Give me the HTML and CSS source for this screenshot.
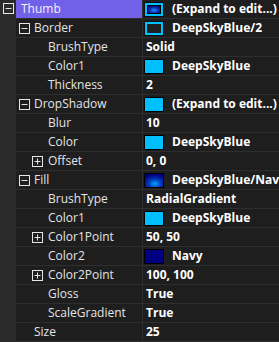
FILE: index.html
```html
<!DOCTYPE html>
<html>
<head>
<meta charset="utf-8">
<link rel="stylesheet" href="styles.css">
</head>
<body>
<div class="grid">
  <div class="row sel">
    <div class="gut"><svg class="tog" width="11" height="11" viewBox="0 0 11 11"><rect x="0.5" y="0.5" width="10" height="10"/><line x1="2.5" y1="5.5" x2="8.5" y2="5.5"/></svg></div>
    <div class="name l1">Thumb</div>
    <div class="val"><span class="sw thumb"><span class="thumb-in"></span></span><b>(Expand to edit...)</b></div>
  </div>
  <div class="row">
    <div class="gut"></div>
    <div class="name l2"><svg class="tog" width="11" height="11" viewBox="0 0 11 11"><rect x="0.5" y="0.5" width="10" height="10"/><line x1="2.5" y1="5.5" x2="8.5" y2="5.5"/></svg>Border</div>
    <div class="val"><span class="sw hollow"></span><b>DeepSkyBlue/2</b></div>
  </div>
  <div class="row"><div class="gut"></div><div class="name l3">BrushType</div><div class="val txt"><b>Solid</b></div></div>
  <div class="row"><div class="gut"></div><div class="name l3">Color1</div><div class="val"><span class="sw dsb"></span><b>DeepSkyBlue</b></div></div>
  <div class="row"><div class="gut"></div><div class="name l3">Thickness</div><div class="val txt"><b>2</b></div></div>
  <div class="row">
    <div class="gut"></div>
    <div class="name l2"><svg class="tog" width="11" height="11" viewBox="0 0 11 11"><rect x="0.5" y="0.5" width="10" height="10"/><line x1="2.5" y1="5.5" x2="8.5" y2="5.5"/></svg>DropShadow</div>
    <div class="val"><span class="sw dsb"></span><b>(Expand to edit...)</b></div>
  </div>
  <div class="row"><div class="gut"></div><div class="name l3">Blur</div><div class="val txt"><b>10</b></div></div>
  <div class="row"><div class="gut"></div><div class="name l3">Color</div><div class="val"><span class="sw dsb"></span><b>DeepSkyBlue</b></div></div>
  <div class="row">
    <div class="gut"></div>
    <div class="name l3b"><svg class="tog" width="11" height="11" viewBox="0 0 11 11"><rect x="0.5" y="0.5" width="10" height="10"/><line x1="2.5" y1="5.5" x2="8.5" y2="5.5"/><line x1="5.5" y1="2.5" x2="5.5" y2="8.5"/></svg>Offset</div>
    <div class="val txt"><b>0, 0</b></div>
  </div>
  <div class="row">
    <div class="gut"></div>
    <div class="name l2"><svg class="tog" width="11" height="11" viewBox="0 0 11 11"><rect x="0.5" y="0.5" width="10" height="10"/><line x1="2.5" y1="5.5" x2="8.5" y2="5.5"/></svg>Fill</div>
    <div class="val"><span class="sw radial"></span><b>DeepSkyBlue/Navy</b></div>
  </div>
  <div class="row"><div class="gut"></div><div class="name l3">BrushType</div><div class="val txt"><b>RadialGradient</b></div></div>
  <div class="row"><div class="gut"></div><div class="name l3">Color1</div><div class="val"><span class="sw dsb"></span><b>DeepSkyBlue</b></div></div>
  <div class="row">
    <div class="gut"></div>
    <div class="name l3b"><svg class="tog" width="11" height="11" viewBox="0 0 11 11"><rect x="0.5" y="0.5" width="10" height="10"/><line x1="2.5" y1="5.5" x2="8.5" y2="5.5"/><line x1="5.5" y1="2.5" x2="5.5" y2="8.5"/></svg>Color1Point</div>
    <div class="val txt"><b>50, 50</b></div>
  </div>
  <div class="row"><div class="gut"></div><div class="name l3">Color2</div><div class="val"><span class="sw navy"></span><b>Navy</b></div></div>
  <div class="row">
    <div class="gut"></div>
    <div class="name l3b"><svg class="tog" width="11" height="11" viewBox="0 0 11 11"><rect x="0.5" y="0.5" width="10" height="10"/><line x1="2.5" y1="5.5" x2="8.5" y2="5.5"/><line x1="5.5" y1="2.5" x2="5.5" y2="8.5"/></svg>Color2Point</div>
    <div class="val txt"><b>100, 100</b></div>
  </div>
  <div class="row"><div class="gut"></div><div class="name l3">Gloss</div><div class="val txt"><b>True</b></div></div>
  <div class="row"><div class="gut"></div><div class="name l3">ScaleGradient</div><div class="val txt"><b>True</b></div></div>
  <div class="row"><div class="gut"></div><div class="name l2">Size</div><div class="val txt"><b>25</b></div></div>
</div>
</body>
</html>
```
FILE: styles.css
```css
html, body {
  margin: 0;
  padding: 0;
  background: #1e1e1e;
  overflow: hidden;
}
.grid {
  width: 279px;
  font-family: "Segoe UI", "Open Sans", "Noto Sans", sans-serif;
  font-size: 12px;
  color: #e4e4e4;
}
.row {
  display: flex;
  height: 19px;
}
.gut {
  width: 16px;
  flex: none;
  background: #2b2b2b;
  display: flex;
  align-items: flex-start;
  padding-top: 3px;
  box-sizing: border-box;
}
.gut .tog { margin-left: 3px; }
.tog rect { fill: none; stroke: #e6e6e6; stroke-width: 1; }
.tog line { stroke: #e6e6e6; stroke-width: 1; }
.name {
  width: 127px;
  flex: none;
  box-sizing: border-box;
  border-bottom: 1px solid #2e2e2e;
  border-right: 1px solid #2e2e2e;
  line-height: 18px;
  white-space: nowrap;
  display: flex;
  align-items: center;
}
.name .tog { flex: none; }
.l1 { padding-left: 5px; }
.l2 { padding-left: 18px; }
.l2 .tog { margin-left: -15px; margin-right: 4px; }
.l3 { padding-left: 32px; }
.l3b { padding-left: 16px; }
.l3b .tog { margin-right: 5px; }
.sel .name { background: #7160e8; color: #f4f2ff; }
.val {
  flex: 1;
  min-width: 0;
  border-bottom: 1px solid #2e2e2e;
  display: flex;
  align-items: center;
  white-space: nowrap;
  overflow: hidden;
  line-height: 18px;
}
.val b { color: #ffffff; font-weight: 700; }
.txt { padding-left: 3px; }
.sw {
  flex: none;
  box-sizing: border-box;
  width: 20px;
  height: 15px;
  margin-left: 1px;
  margin-right: 8px;
  border: 1px solid #000;
}
.dsb { background: #00bfff; }
.navy { background: #000080; }
.hollow { border: 1px solid #101010; box-shadow: inset 0 0 0 2px #00bfff; background: #202020; }
.radial { background: radial-gradient(ellipse 70% 70% at 55% 75%, #00a8ff 0%, #0040c0 45%, #000080 100%); }
.thumb {
  border: 1px solid #101010;
  background: #00bfff;
  padding: 2px;
  display: flex;
}
.thumb-in {
  flex: 1;
  border: 1px solid #000;
  background: radial-gradient(ellipse 70% 70% at 50% 60%, #2a8cff 0%, #0030b0 55%, #000070 100%);
}
```
